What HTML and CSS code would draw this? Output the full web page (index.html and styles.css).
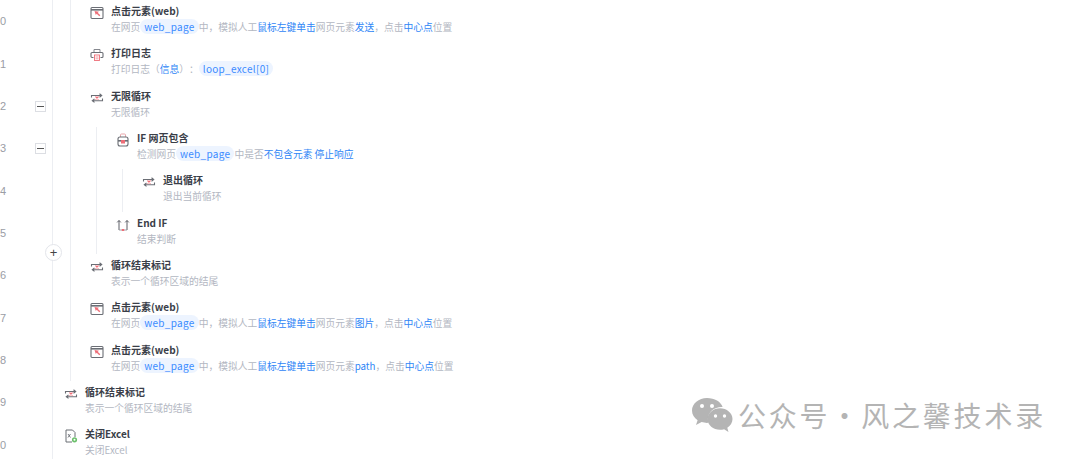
FILE: index.html
```html
<!DOCTYPE html>
<html lang="en">
<head>
    <meta charset="UTF-8">
    <meta name="viewport" content="width=device-width, initial-scale=1.0">
    <title>流程步骤</title>
    <link rel="stylesheet" href="styles.css">
</head>
<body>
    <svg class="sprites" aria-hidden="true">
        <symbol id="i-click" viewBox="0 0 14 14">
            <rect x="1" y="1.500" width="12" height="11" rx="1" fill="none" stroke="#6b6e75" stroke-width="1.100"/>
            <path d="M1 3.800h12" stroke="#6b6e75" stroke-width="1.600"/>
            <path d="M4.500 5l1.300 4 .9-1.300 2.600 2.600 1-1-2.600-2.600 1.300-.9z" fill="#ee6e78"/>
        </symbol>
        <symbol id="i-print" viewBox="0 0 14 14">
            <path d="M4 4V1.500h6V4" fill="none" stroke="#85888f"/>
            <path d="M3.500 9.500H2a1 1 0 0 1-1-1V5.500a1 1 0 0 1 1-1h10a1 1 0 0 1 1 1v3a1 1 0 0 1-1 1h-1.500" fill="none" stroke="#6b6e75" stroke-width="1.100"/>
            <rect x="4.500" y="7" width="5" height="5.500" fill="#fff" stroke="#ee6e78" stroke-width=".9"/>
            <path d="M5.500 9h3M5.500 10.800h3" stroke="#ee6e78" stroke-width=".7"/>
        </symbol>
        <symbol id="i-loop" viewBox="0 0 14 14">
            <path d="M1.500 6.500V4.500h10M9.500 2.800l2.200 1.700-2.200 1.700" fill="none" stroke="#6b6e75" stroke-width="1.100"/>
            <path d="M12.500 7.500v2.200h-10M4.500 8l-2.200 1.700 2.200 1.700" fill="none" stroke="#6b6e75" stroke-width="1.100"/>
            <path d="M5.500 5.500l3 3M8.500 5.500l-3 3" stroke="#ee6e78" stroke-width="1.100"/>
        </symbol>
        <symbol id="i-if" viewBox="0 0 14 14">
            <path d="M4.500 4V2a1 1 0 0 1 1-1h3a1 1 0 0 1 1 1v2" fill="none" stroke="#e9a6ab"/>
            <rect x="2" y="4" width="10" height="9" rx="2" fill="none" stroke="#6b6e75" stroke-width="1.100"/>
            <rect x="2" y="7" width="10" height="1.600" fill="#6b6e75"/>
            <rect x="5" y="7" width="4" height="3.500" fill="#ee6e78"/>
        </symbol>
        <symbol id="i-end" viewBox="0 0 14 14">
            <path d="M3 12V2.500M1.200 4.400L3 2.500l1.800 1.900" fill="none" stroke="#5c5f66"/>
            <path d="M11 12V2.500M9.200 4.400L11 2.500l1.800 1.900" fill="none" stroke="#5c5f66"/>
            <path d="M3 12h8" stroke="#8a8d94" stroke-width=".8"/>
            <rect x="5.800" y="11" width="2.400" height="2" fill="#ee6e78"/>
        </symbol>
        <symbol id="i-excel" viewBox="0 0 14 14">
            <path d="M8 13H2V1h6.500L11 3.500V8" fill="none" stroke="#6b6e75"/>
            <path d="M4 5l2.500 3.500M6.500 5L4 8.500" stroke="#6b6e75" stroke-width=".9"/>
            <circle cx="10.500" cy="10.800" r="2.600" fill="#6cc06c"/>
            <circle cx="10.500" cy="10.800" r="1" fill="#fff"/>
        </symbol>
        <symbol id="i-wechat" viewBox="0 0 42 36">
            <path d="M16 1C7.700 1 1 6.600 1 13.500c0 4 2.200 7.400 5.600 9.700L5 28l5.600-2.900c1.700.5 3.500.8 5.400.8.500 0 1 0 1.500-.1-.4-1.200-.6-2.500-.6-3.800C16.900 15.500 23 10 30.700 10c.3 0 .6 0 .9 0C30 4.800 23.600 1 16 1z" fill="#b4b4b4"/>
            <path d="M41.500 22c0-6-5.800-10.800-12.500-10.800S16.500 16 16.500 22 22.300 32.800 29 32.800c1.400 0 2.800-.2 4.100-.6L37.500 35l-1.200-4.200c3.200-2 5.200-5.200 5.200-8.800z" fill="#b4b4b4"/>
            <circle cx="11" cy="9" r="2" fill="#fff"/>
            <circle cx="21" cy="9" r="2" fill="#fff"/>
            <circle cx="24.500" cy="19" r="1.700" fill="#fff"/>
            <circle cx="33.500" cy="19" r="1.700" fill="#fff"/>
        </symbol>
    </svg>

    <div class="page">
        <div class="gutter">
            <div class="gutter-cell"><span class="line-no">0</span></div>
            <div class="gutter-cell"><span class="line-no">1</span></div>
            <div class="gutter-cell"><span class="line-no">2</span><span class="fold"></span></div>
            <div class="gutter-cell"><span class="line-no">3</span><span class="fold"></span></div>
            <div class="gutter-cell"><span class="line-no">4</span></div>
            <div class="gutter-cell"><span class="line-no">5</span></div>
            <div class="gutter-cell"><span class="line-no">6</span></div>
            <div class="gutter-cell"><span class="line-no">7</span></div>
            <div class="gutter-cell"><span class="line-no">8</span></div>
            <div class="gutter-cell"><span class="line-no">9</span></div>
            <div class="gutter-cell"><span class="line-no">0</span></div>
        </div>

        <div class="steps">
            <div class="group">
                <div class="step">
                    <svg class="icon"><use href="#i-click"/></svg>
                    <div>
                        <div class="title">点击元素(web)</div>
                        <div class="desc">在网页<span class="pill">web_page</span>中，模拟人工<em>鼠标左键单击</em>网页元素<em>发送</em>，点击<em>中心点</em>位置</div>
                    </div>
                </div>
                <div class="step">
                    <svg class="icon"><use href="#i-print"/></svg>
                    <div>
                        <div class="title">打印日志</div>
                        <div class="desc">打印日志（<em>信息</em>）：<span class="pill">loop_excel[0]</span></div>
                    </div>
                </div>
                <div class="step">
                    <svg class="icon"><use href="#i-loop"/></svg>
                    <div>
                        <div class="title">无限循环</div>
                        <div class="desc">无限循环</div>
                    </div>
                </div>
                <div class="group group-inner">
                    <div class="step">
                        <svg class="icon"><use href="#i-if"/></svg>
                        <div>
                            <div class="title">IF 网页包含</div>
                            <div class="desc">检测网页<span class="pill">web_page</span>中是否<em>不包含元素 停止响应</em></div>
                        </div>
                    </div>
                    <div class="group group-inner">
                        <div class="step">
                            <svg class="icon"><use href="#i-loop"/></svg>
                            <div>
                                <div class="title">退出循环</div>
                                <div class="desc">退出当前循环</div>
                            </div>
                        </div>
                    </div>
                    <div class="step">
                        <svg class="icon"><use href="#i-end"/></svg>
                        <div>
                            <div class="title">End IF</div>
                            <div class="desc">结束判断</div>
                        </div>
                    </div>
                </div>
                <div class="step">
                    <svg class="icon"><use href="#i-loop"/></svg>
                    <div>
                        <div class="title">循环结束标记</div>
                        <div class="desc">表示一个循环区域的结尾</div>
                    </div>
                </div>
                <div class="step">
                    <svg class="icon"><use href="#i-click"/></svg>
                    <div>
                        <div class="title">点击元素(web)</div>
                        <div class="desc">在网页<span class="pill">web_page</span>中，模拟人工<em>鼠标左键单击</em>网页元素<em>图片</em>，点击<em>中心点</em>位置</div>
                    </div>
                </div>
                <div class="step">
                    <svg class="icon"><use href="#i-click"/></svg>
                    <div>
                        <div class="title">点击元素(web)</div>
                        <div class="desc">在网页<span class="pill">web_page</span>中，模拟人工<em>鼠标左键单击</em>网页元素<em>path</em>，点击<em>中心点</em>位置</div>
                    </div>
                </div>
            </div>
            <div class="step step-top">
                <svg class="icon"><use href="#i-loop"/></svg>
                <div>
                    <div class="title">循环结束标记</div>
                    <div class="desc">表示一个循环区域的结尾</div>
                </div>
            </div>
            <div class="step step-top">
                <svg class="icon"><use href="#i-excel"/></svg>
                <div>
                    <div class="title">关闭Excel</div>
                    <div class="desc">关闭Excel</div>
                </div>
            </div>
        </div>

        <button class="add-btn" type="button">+</button>
    </div>

    <div class="watermark">
        <svg class="wechat"><use href="#i-wechat"/></svg>
        <span>公众号·风之馨技术录</span>
    </div>
</body>
</html>
```

FILE: styles.css
```css
:root {
    --row-height: 42.33px;
    --guide: #eceef2;
    --blue: #2f86f6;
    --grey: #b3b7c2;
}

* {
    box-sizing: border-box;
    margin: 0;
    padding: 0;
}

html, body {
    height: 100%;
    overflow: hidden;
}

body {
    position: relative;
    background: #fff;
    font-family: "Noto Sans CJK SC", "Noto Sans", sans-serif;
    text-spacing-trim: space-all;
}

.sprites {
    display: none;
}

.page {
    position: relative;
    display: flex;
    height: 459px;
}

.gutter {
    width: 52px;
    flex-shrink: 0;
}

.gutter-cell {
    position: relative;
    display: flex;
    align-items: flex-end;
    justify-content: space-between;
    height: var(--row-height);
    padding: 0 6px 14px 0;
}

.line-no {
    font-family: "Liberation Sans", sans-serif;
    font-size: 11px;
    line-height: 14px;
    color: #9a9da5;
}

.fold {
    position: relative;
    width: 11px;
    height: 11px;
    margin-bottom: 1px;
    border: 1px solid #dcdee3;
}

.fold::after {
    content: "";
    position: absolute;
    left: 1px;
    right: 1px;
    top: 4px;
    height: 1px;
    background: #555;
}

.steps {
    flex: 1;
    border-left: 1px solid var(--guide);
}

.group {
    margin-left: 17px;
    border-left: 1px solid var(--guide);
}

.group-inner {
    margin-left: 25px;
}

.step {
    display: flex;
    gap: 7px;
    height: var(--row-height);
    padding: 3px 0 0 19px;
}

.step-top {
    padding-left: 11px;
}

.icon {
    width: 14px;
    height: 14px;
    margin-top: 3px;
    flex-shrink: 0;
}

.title {
    font-size: 10px;
    font-weight: 700;
    line-height: 16px;
    color: #3a3e48;
}

.desc {
    font-size: 9.75px;
    line-height: 16px;
    color: var(--grey);
    white-space: nowrap;
}

.desc em {
    font-style: normal;
    color: var(--blue);
}

.pill {
    display: inline-block;
    height: 15px;
    padding: 0 4px;
    line-height: 16px;
    font-size: 10px;
    letter-spacing: .3px;
    border-radius: 8px;
    background: #edf4ff;
    color: #3b8bff;
}

.add-btn {
    position: absolute;
    left: 45px;
    top: 244px;
    width: 17px;
    height: 17px;
    border: 1px solid #e3e5ea;
    border-radius: 50%;
    background: #fff;
    color: #444;
    font-size: 13px;
    line-height: 13px;
    font-family: "Liberation Sans", sans-serif;
}

.watermark {
    position: absolute;
    left: 691px;
    top: 397px;
    display: flex;
    align-items: center;
    gap: 5px;
    font-size: 28px;
    letter-spacing: 2.8px;
    line-height: 36px;
    color: #b4b4b4;
    white-space: nowrap;
}

.wechat {
    width: 42px;
    height: 36px;
}
```
